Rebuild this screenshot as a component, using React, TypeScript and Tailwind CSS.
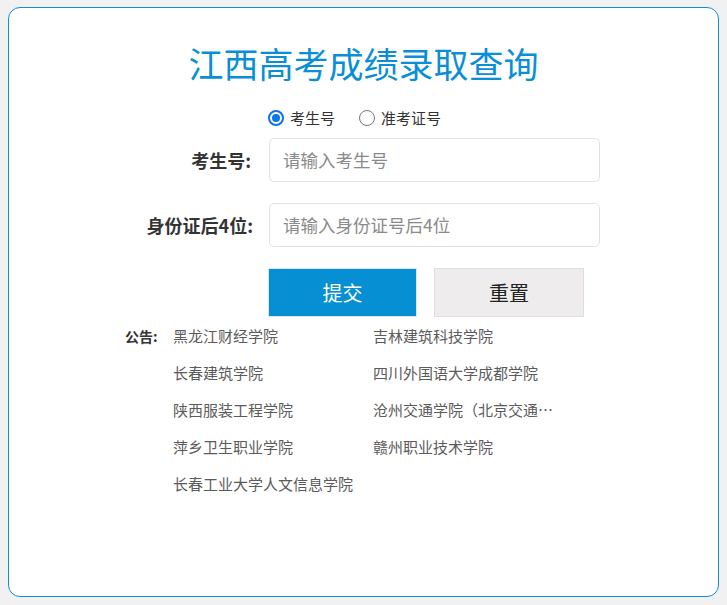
export default function App() {
  const left = ['黑龙江财经学院', '长春建筑学院', '陕西服装工程学院', '萍乡卫生职业学院', '长春工业大学人文信息学院'];
  const right = ['吉林建筑科技学院', '四川外国语大学成都学院', '沧州交通学院（北京交通大学海滨学院）', '赣州职业技术学院'];
  const items: string[] = [];
  for (let i = 0; i < left.length; i++) {
    items.push(left[i]);
    if (right[i]) items.push(right[i]);
  }

  return (
    <div
      className="h-[605px] bg-[#f1f1f1] pl-[8px] pr-[8px] pt-[7px] pb-[8px]"
      style={{ fontFamily: '"Noto Sans CJK SC", "Noto Sans", sans-serif' }}
    >
      <div className="h-full rounded-[12px] border border-[#0b8fd6] bg-white">
        {/* Title */}
        <h1 className="mt-[32px] text-center text-[35px] leading-[46px] text-[#0a8fd5]">江西高考成绩录取查询</h1>

        {/* Radio choice */}
        <div className="mt-[22px] ml-[259px] flex items-center text-[15px] leading-[20px] text-[#333]">
          <label className="flex items-center gap-[6px]">
            <span className="flex h-[16px] w-[16px] items-center justify-center rounded-full border-2 border-[#0a74e8]">
              <span className="h-[8px] w-[8px] rounded-full bg-[#0a74e8]" />
            </span>
            考生号
          </label>
          <label className="ml-[24px] flex items-center gap-[6px]">
            <span className="h-[16px] w-[16px] rounded-full border border-[#777]" />
            准考证号
          </label>
        </div>

        {/* Inputs */}
        <div className="mt-[10px] flex items-center">
          <div className="w-[242px] text-right text-[18px] font-bold text-[#333]">考生号:</div>
          <div className="ml-[18px] flex h-[44px] w-[331px] items-center rounded-[5px] border border-[#e2e2e2] pl-[13px] text-[17.5px] text-[#8a8a8a]">
            请输入考生号
          </div>
        </div>
        <div className="mt-[21px] flex items-center">
          <div className="w-[244px] text-right text-[18px] font-bold text-[#333]">身份证后4位:</div>
          <div className="ml-[16px] flex h-[44px] w-[331px] items-center rounded-[5px] border border-[#e2e2e2] pl-[13px] text-[17.5px] text-[#8a8a8a]">
            请输入身份证号后4位
          </div>
        </div>

        {/* Buttons */}
        <div className="mt-[21px] ml-[259px] flex gap-[17px]">
          <button className="flex h-[49px] w-[149px] items-center justify-center border border-[#dbe7ee] bg-[#0690d3] text-[20px] text-white">
            提交
          </button>
          <button className="flex h-[49px] w-[150px] items-center justify-center border border-[#dedede] bg-[#eeecec] text-[20px] text-[#222]">
            重置
          </button>
        </div>

        {/* Notices */}
        <div className="mt-[7px] ml-[116px] flex text-[15px]">
          <div className="w-[48px] shrink-0 text-[14px] font-bold leading-[24px] text-[#333]">公告:</div>
          <div className="grid grid-cols-[200px_200px] gap-y-[13px]">
            {items.map((t) => (
              <div key={t} className="max-w-[186px] truncate leading-[24px] text-[#5b5b5b]">
                {t}
              </div>
            ))}
          </div>
        </div>
      </div>
    </div>
  );
}
